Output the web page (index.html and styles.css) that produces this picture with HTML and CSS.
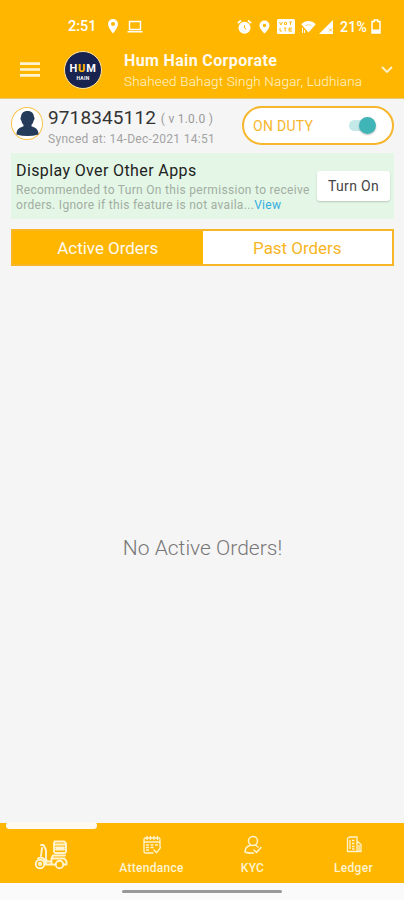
FILE: index.html
```html
<!DOCTYPE html>
<html lang="en">
<head>
    <meta charset="UTF-8">
    <meta name="viewport" content="width=device-width, initial-scale=1.0">
    <title>Hum Hain Corporate</title>
    <link rel="stylesheet" href="styles.css">
</head>
<body>
    <div class="app">
        <header class="header">
            <!-- Status bar -->
            <div class="status-bar">
                <span class="clock">2:51</span>
                <svg class="status-pin" width="10" height="15" viewBox="0 0 10 15"><path fill="#fff" fill-rule="evenodd" d="M5 0a5 5 0 0 0-5 5c0 3.5 5 9.500 5 9.500s5-6 5-9.500a5 5 0 0 0-5-5zm0 3a2 2 0 1 1 0 4 2 2 0 0 1 0-4z"/></svg>
                <svg class="status-laptop" width="16" height="13" viewBox="0 0 16 13"><path fill="none" stroke="#fff" stroke-width="1.400" d="M2.500 9.500V1.500h11v8zM.5 11.800h15"/></svg>
                <div class="status-right">
                    <svg width="15" height="16" viewBox="0 0 15 16"><circle cx="7.500" cy="8.800" r="6" fill="#fff"/><path d="M.8 4.200L4 1.500M14.200 4.200L11 1.500" stroke="#fff" stroke-width="1.700"/><path d="M7.500 6v3l1.800 1.300" fill="none" stroke="#ffb600" stroke-width=".9"/></svg>
                    <svg class="location" width="11" height="14" viewBox="0 0 11 14"><path fill="#fff" fill-rule="evenodd" d="M5.500 .5a5 5 0 0 0-5 5c0 3.500 5 8 5 8s5-4.500 5-8a5 5 0 0 0-5-5zm0 3.300a1.700 1.700 0 1 1 0 3.400 1.700 1.700 0 0 1 0-3.400z"/></svg>
                    <svg class="volte" width="18" height="15" viewBox="0 0 18 15"><rect width="18" height="15" rx="1.500" fill="#fff"/><path d="M2.500 3l1.500 3 1.500-3M7.500 3.500h2v2h-2zM12 3h3M13.500 3v3M3 9v3h2M7 9h2.500M8.200 9v3.500M15 9h-3v3.200h3M12 10.700h2.500" fill="none" stroke="#ffb600" stroke-width=".9"/></svg>
                    <svg class="wifi" width="15" height="14" viewBox="0 0 15 14"><path fill="#fff" d="M.3 4.200C4.500 0 10.500 0 14.700 4.200L7.500 12.500z"/><path d="M4.500 5.500Q7.500 3.800 10.500 5.500" fill="none" stroke="#ffb600" stroke-width=".5"/><path d="M1.500 8v5M3.500 10v3" stroke="#fff"/></svg>
                    <svg class="signal" width="14" height="14" viewBox="0 0 14 14"><path fill="#fff" d="M0 14L14 0v14z"/><path d="M10 8.500l3 3M13 8.500l-3 3" stroke="#ffb600" stroke-width=".8"/></svg>
                    <span class="percent">21%</span>
                    <svg class="battery" width="10" height="15" viewBox="0 0 10 15"><path fill="none" stroke="#fff" stroke-width="1.500" d="M1 2.500h2.300V1h3.400v1.500H9V14H1z"/><path fill="#fff" d="M1 10.500h8V14H1z"/></svg>
                </div>
            </div>
            <!-- Company bar -->
            <div class="company-bar">
                <svg class="menu" width="20" height="15" viewBox="0 0 20 15"><path stroke="#fff4d2" stroke-width="2.700" d="M0 1.700h20M0 7.500h20M0 13.300h20"/></svg>
                <div class="logo">
                    <div class="logo-name">H<b>U</b>M</div>
                    <div class="logo-sub">HAIN</div>
                </div>
                <div class="company">
                    <h1>Hum Hain Corporate</h1>
                    <p>Shaheed Bahagt Singh Nagar, Ludhiana</p>
                </div>
                <svg class="chevron" width="12" height="8" viewBox="0 0 12 8"><path fill="none" stroke="#fff4d2" stroke-width="1.800" d="M1 1l5 5 5-5"/></svg>
            </div>
        </header>

        <main class="content">
            <!-- Rider details -->
            <section class="rider">
                <div class="avatar">
                    <svg width="23" height="26" viewBox="0 0 23 26"><path fill="#243c59" d="M11.500 0C7.200 0 5 2.700 5 6.300c-.8 0-.8 2.200.3 3.200.4 2 1 3.300 2.200 4.300v1.500C4.500 16.500.5 17.300.5 23.500q11 3 22 0c0-6.200-4-7-7-8.200v-1.500c1.200-1 1.800-2.300 2.200-4.300 1.100-1 1.100-3.200.3-3.200C18 2.700 15.800 0 11.500 0z"/></svg>
                </div>
                <div class="rider-info">
                    <div class="rider-phone">9718345112 <span>( v 1.0.0 )</span></div>
                    <div class="synced">Synced at: 14-Dec-2021 14:51</div>
                </div>
                <div class="duty">
                    <span>ON DUTY</span>
                    <div class="switch"></div>
                </div>
            </section>

            <!-- Permission banner -->
            <section class="banner">
                <div class="banner-text">
                    <h2>Display Over Other Apps</h2>
                    <p>Recommended to Turn On this permission to receive<br>orders. Ignore if this feature is not availa...<a>View</a></p>
                </div>
                <button class="turn-on">Turn On</button>
            </section>

            <div class="tabs">
                <div class="tab active">Active Orders</div>
                <div class="tab">Past Orders</div>
            </div>

            <div class="empty">No Active Orders!</div>
        </main>

        <!-- Bottom navigation -->
        <nav class="bottom-nav">
            <div class="indicator"></div>
            <div class="nav-item selected">
                <svg width="34" height="30" viewBox="0 0 34 30" fill="none" stroke="#fff4d2" stroke-width="1.900" stroke-linejoin="round" stroke-linecap="round">
                    <path d="M20.500 1.500h10l1.500 2v8q0 1.500-1.500 1.500h-9q-1.500 0-1.500-1.500v-8zM20 4.500h12M22 7.500h8M22 9.500h8M19.500 15.500h11.500M19 15.500l-1.500 3V24.500H11M18.500 18.500h12l2 3v3h-3M7 5h2.500l2.500 5v9l1 2.500h4M8 8l-1 8M4 18.500c3-2 7-.5 8 5M17.500 24.500h4"/>
                    <circle cx="6" cy="24" r="4.300"/><circle cx="6" cy="24" r="1.200"/><circle cx="25.500" cy="24.500" r="3.800"/>
                </svg>
            </div>
            <div class="nav-item">
                <svg width="20" height="20" viewBox="0 0 20 20" fill="none" stroke="#fff4d2" stroke-width="1.300" stroke-linejoin="round" stroke-linecap="round">
                    <path d="M11 18H3.500q-1.500 0-1.500-1.500v-12Q2 3 3.500 3h13Q18 3 18 4.500V12M2 7h16M5 1.500v3M8.500 1.500v3M12 1.500v3M15.500 1.500v3M4.500 10h2M9 10h2M13.500 10h2M4.500 12.500h2M9 12.500h2M4.500 15h2M12 15l2.500 2.800 4-5.200"/>
                </svg>
                <span>Attendance</span>
            </div>
            <div class="nav-item">
                <svg width="20" height="20" viewBox="0 0 20 20" fill="none" stroke="#fff4d2" stroke-width="1.500" stroke-linejoin="round" stroke-linecap="round">
                    <circle cx="10" cy="6" r="4.500"/><path d="M7 10.500c-3.500 1-5 3.500-5 6.500q4 1.500 8.500 1M11 15l2.500 2.500 4.500-5M13 10.500l2 1.500"/>
                </svg>
                <span>KYC</span>
            </div>
            <div class="nav-item">
                <svg width="20" height="20" viewBox="0 0 20 20" fill="none" stroke="#fff4d2" stroke-width="1.300" stroke-linejoin="round">
                    <path d="M3.500 3.500L5.500 2H13v14.500H3.500zM13 6l4 3.500v7h-4M6 5v9M8 5.500h2.500M8 8.500h2.500M8 11.500h2.500M8 14h2.500M15 10v6"/>
                </svg>
                <span>Ledger</span>
            </div>
        </nav>
        <div class="gesture-bar"><div class="gesture-handle"></div></div>
    </div>
</body>
</html>
```
FILE: styles.css
```css
* {
    box-sizing: border-box;
}

body {
    margin: 0;
    font-family: Roboto, sans-serif;
    background-color: #f5f5f5;
}

h1, h2, p {
    margin: 0;
}

svg {
    display: block;
    flex-shrink: 0;
}

.app {
    height: 900px;
    display: flex;
    flex-direction: column;
    overflow: hidden;
}

.header {
    height: 99px;
    flex-shrink: 0;
    background-color: #ffb600;
    border-bottom: 1px solid #e9c878;
    color: #fff4d2;
}

.status-bar {
    height: 44px;
    padding: 9px 23px 0 68px;
    display: flex;
    align-items: center;
    color: #fff;
}

.clock {
    width: 40px;
    font-size: 14.500px;
    font-weight: 500;
}

.status-laptop {
    margin-left: 9px;
}

.status-right {
    margin-left: auto;
    display: flex;
    align-items: center;
}

.location {
    margin-left: 7px;
}

.volte {
    margin-left: 7px;
}

.wifi {
    margin-left: 6px;
}

.signal {
    margin-left: 3px;
}

.percent {
    width: 28px;
    margin-left: 7px;
    font-size: 14px;
    font-weight: 500;
    letter-spacing: 0.3px;
    white-space: nowrap;
}

.battery {
    margin-left: 3px;
}

.company-bar {
    display: flex;
    align-items: center;
    height: 51px;
    padding: 0 11px 0 20px;
}

.logo {
    width: 38px;
    height: 38px;
    margin-left: 24px;
    margin-right: 22px;
    padding-top: 10px;
    border: 1.500px solid #ffe2a0;
    border-radius: 50%;
    background-color: #18244f;
    color: #fff;
    text-align: center;
}

.logo-name {
    font-size: 11px;
    font-weight: 700;
    line-height: 13px;
    letter-spacing: 0.8px;
}

.logo-name b {
    color: #ffb600;
}

.logo-sub {
    font-size: 5px;
    font-weight: 700;
    line-height: 6px;
    letter-spacing: 0.3px;
}

.company {
    flex: 1;
    padding-top: 1px;
    white-space: nowrap;
}

.company h1 {
    font-size: 16px;
    font-weight: 700;
    line-height: 21px;
    letter-spacing: 0.36px;
    color: #fffaf0;
}

.company p {
    font-size: 13.500px;
    font-weight: 300;
    line-height: 20px;
    letter-spacing: 0.17px;
}

.content {
    flex: 1;
    display: flex;
    flex-direction: column;
    padding: 7px 10px 0 11px;
}

.rider {
    display: flex;
    height: 39px;
}

.avatar {
    width: 32px;
    height: 33px;
    margin-top: 1px;
    display: flex;
    align-items: center;
    justify-content: center;
    border: 1.500px solid #fcc34a;
    border-radius: 50%;
    background-color: #fff;
}

.rider-info {
    flex: 1;
    margin-left: 5px;
    white-space: nowrap;
}

.rider-phone {
    font-size: 19px;
    line-height: 23px;
    letter-spacing: 0.12px;
    color: #333;
}

.rider-phone span {
    font-size: 12px;
    letter-spacing: 0.25px;
    color: #999;
    vertical-align: 1px;
}

.synced {
    font-size: 12px;
    line-height: 17px;
    letter-spacing: 0.3px;
    color: #a3a3a3;
}

.duty {
    width: 152px;
    height: 39px;
    padding: 0 17px 0 9px;
    display: flex;
    align-items: center;
    justify-content: space-between;
    border: 2px solid #f6b62e;
    border-radius: 20px;
    background-color: #fff;
    font-size: 14px;
    letter-spacing: 0.3px;
    color: #f6b62e;
}

/* The knob hangs over the right end of the track */
.switch {
    position: relative;
    width: 26px;
    height: 11px;
    border-radius: 6px;
    background-color: #c5e9e9;
}

.switch::after {
    content: "";
    position: absolute;
    top: -3px;
    right: -1px;
    width: 17px;
    height: 17px;
    border-radius: 50%;
    background-color: #40b5b7;
    box-shadow: 0 1px 2px rgba(0, 0, 0, 0.25);
}

.banner {
    height: 66px;
    margin-top: 8px;
    padding: 0 4px 0 5px;
    display: flex;
    align-items: center;
    justify-content: space-between;
    background-color: #e4f7e6;
}

.banner-text {
    white-space: nowrap;
}

.banner h2 {
    font-size: 16px;
    font-weight: 400;
    line-height: 22px;
    letter-spacing: 0.38px;
    color: #222;
}

.banner p {
    padding-top: 1px;
    font-size: 12px;
    line-height: 15px;
    letter-spacing: 0.31px;
    color: #a2ada3;
}

.banner a {
    color: #35ade0;
}

.turn-on {
    width: 73px;
    height: 30px;
    padding: 0;
    border: none;
    border-radius: 3px;
    background-color: #fff;
    box-shadow: 0 1px 2px rgba(0, 0, 0, 0.2);
    font-family: inherit;
    font-size: 14px;
    letter-spacing: 0.3px;
    color: #444;
}

.tabs {
    height: 37px;
    margin-top: 10px;
    display: flex;
    border: 2px solid #f8b526;
    background-color: #fff;
}

.tab {
    flex: 1;
    display: flex;
    align-items: center;
    justify-content: center;
    font-size: 17px;
    letter-spacing: -0.05px;
    color: #f8b526;
}

.tab.active {
    background-color: #ffb600;
    color: #fffaf0;
}

.empty {
    flex: 1;
    display: flex;
    align-items: center;
    justify-content: center;
    padding-top: 7px;
    font-size: 21px;
    font-weight: 300;
    color: #777;
}

.bottom-nav {
    position: relative;
    height: 60px;
    flex-shrink: 0;
    display: grid;
    grid-template-columns: repeat(4, 1fr);
    background-color: #ffb600;
    color: #fff4d2;
}

.indicator {
    position: absolute;
    top: -1px;
    left: 6px;
    width: 91px;
    height: 7px;
    border-radius: 4px;
    background-color: #fffaf0;
}

.nav-item {
    display: flex;
    flex-direction: column;
    align-items: center;
    padding-top: 12px;
    font-size: 12px;
    font-weight: 500;
    line-height: 14px;
    letter-spacing: 0.3px;
}

.nav-item span {
    margin-top: 6px;
}

.nav-item.selected {
    padding-top: 17px;
}

.gesture-bar {
    height: 17px;
    flex-shrink: 0;
    padding-top: 7px;
    background-color: #fafafa;
}

.gesture-handle {
    width: 160px;
    height: 3px;
    margin: 0 auto;
    border-radius: 2px;
    background-color: #999;
}
```
